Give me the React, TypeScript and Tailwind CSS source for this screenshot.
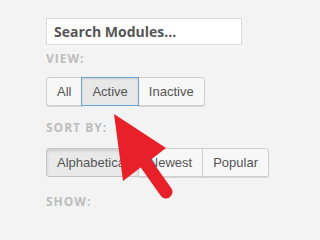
import React from "react";

const font = { fontFamily: '"Open Sans", "Liberation Sans", sans-serif' };
const btnFont = { fontFamily: '"Liberation Sans", Arial, sans-serif' };

function Segmented({ items, selected, focused }: { items: string[]; selected: string; focused?: boolean }) {
  return (
    <div className="flex">
      {items.map((label, i) => {
        const isSel = label === selected;
        const first = i === 0;
        const last = i === items.length - 1;
        let cls =
          "h-[29px] px-[10px] text-[13px] text-[#555] border leading-none flex items-center -ml-px first:ml-0 ";
        if (first) cls += "rounded-l-[3px] ";
        if (last) cls += "rounded-r-[3px] ";
        if (isSel && focused) {
          cls += "relative z-10 bg-[#e8e8e8] border-[#6ba4d8] shadow-[inset_0_1px_2px_rgba(0,0,0,0.12)]";
        } else if (isSel) {
          cls += "bg-[#e9e9e9] border-[#c4c4c4] shadow-[inset_0_2px_3px_rgba(0,0,0,0.12)]";
        } else {
          cls += "bg-[#f7f7f7] border-[#cfcfcf] shadow-[0_1px_0_#d5d5d5]";
        }
        return (
          <button key={label} className={cls} style={btnFont}>
            {label}
          </button>
        );
      })}
    </div>
  );
}

function Label({ children }: { children: React.ReactNode }) {
  return (
    <div className="text-[12px] font-bold tracking-[1px] text-[#bdbdbd] leading-[16px]">{children}</div>
  );
}

export default function App() {
  return (
    <div className="relative min-h-screen w-full overflow-hidden bg-[#f3f3f3]" style={font}>
      <div className="pl-[46px] pt-[18px]">
        <div className="w-[196px] h-[27px] bg-white border border-[#dcdcdc] flex items-center pl-[7px] text-[14px] font-bold text-[#555]">
          Search Modules...
        </div>
        <div className="mt-[6px]">
          <Label>VIEW:</Label>
        </div>
        <div className="mt-[10px]">
          <Segmented items={["All", "Active", "Inactive"]} selected="Active" focused />
        </div>
        <div className="mt-[14px]">
          <Label>SORT BY:</Label>
        </div>
        <div className="mt-[12px]">
          <Segmented items={["Alphabetical", "Newest", "Popular"]} selected="Alphabetical" />
        </div>
        <div className="mt-[17px]">
          <Label>SHOW:</Label>
        </div>
      </div>
      <svg className="absolute left-0 top-0" width="308" height="214" viewBox="0 0 308 214">
        <polygon points="114,114 166,148 123,181" fill="#e8202a" />
        <line x1="142" y1="158" x2="166" y2="192" stroke="#e8202a" strokeWidth="13" strokeLinecap="round" />
      </svg>
    </div>
  );
}
